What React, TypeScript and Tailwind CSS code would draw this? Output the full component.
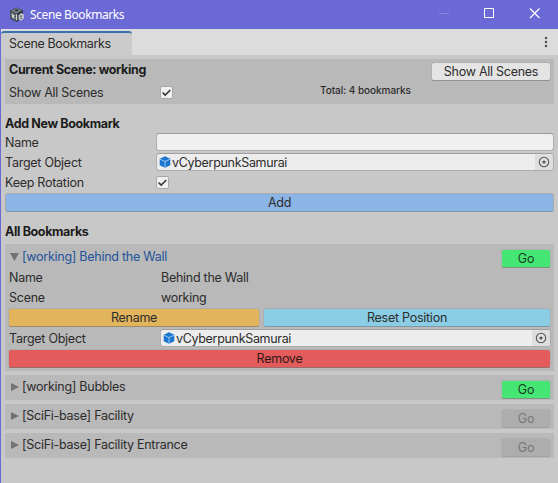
import React from "react";

function Cube() {
  return (
    <svg className="shrink-0" width="12" height="12" viewBox="0 0 12 12">
      <path d="M6 0.3 11.3 2.7V9.2L6 11.8 0.7 9.2V2.7Z" fill="#1c75cf" />
      <path d="M1 3.2 6 5.5 11 3.2M6 5.5V11.3" fill="none" stroke="#a9d2f5" strokeWidth="0.9" />
    </svg>
  );
}

function AppIcon() {
  return (
    <svg className="shrink-0" width="16" height="16" viewBox="0 0 16 16">
      <path d="M7.5 0.5 14 3.5V11L7.5 15 1 11.5V3.8Z" fill="#343a42" />
      <path d="M7.5 1 13 3.6 7.5 6.4 1.8 3.9Z" fill="#77818a" />
      <path d="M1.5 4.5 7 7V14L1.5 11Z" fill="#59636c" />
      <path d="M7.5 2.2 9.8 3.4 7.5 4.6 5.2 3.4Z" fill="#2a2f35" />
      <path d="M2.8 6.8 5.4 11.4M5.4 8 3 10.4M7.6 7.2V13.2" stroke="#d9dee2" strokeWidth="1.1" fill="none" />
      <path d="M9.6 8.2 12.4 6 14.8 7.6V11.6L12 13.8 9.6 12.4Z" fill="#c3c9ce" />
      <path d="M11.2 9.1H13M11.2 11.3H13" stroke="#4a5159" strokeWidth="1.1" />
    </svg>
  );
}

function Check() {
  return (
    <span className="flex h-[13px] w-[13px] shrink-0 items-center justify-center rounded-[2px] border border-[#a9a9a9] bg-[#f0f0f0]">
      <svg className="shrink-0" width="11" height="11" viewBox="0 0 11 11">
        <path d="M1.6 5.6 4.2 8.1 9.3 3" fill="none" stroke="#383838" strokeWidth="1.6" />
      </svg>
    </span>
  );
}

function ObjectField() {
  return (
    <div className="flex h-[18px] flex-1 items-center overflow-hidden rounded-[3px] border border-[#adadad] border-t-[#a0a0a0] bg-[#ededed] pl-[2px]">
      <Cube />
      <span className="ml-px flex-1 pt-px tracking-[-0.32px]">vCyberpunkSamurai</span>
      <span className="flex h-full w-[18px] items-center justify-center bg-[#dedede]">
        <svg width="12" height="12" viewBox="0 0 12 12">
          <circle cx="6" cy="6" r="4.7" fill="none" stroke="#555" strokeWidth="1.1" />
          <circle cx="6" cy="6" r="1.6" fill="#555" />
        </svg>
      </span>
    </div>
  );
}

function Row({ label, wide, children }: { label: string; wide?: boolean; children?: React.ReactNode }) {
  return (
    <div className="flex h-5 items-center">
      <span className={wide ? "w-[152px] shrink-0 pt-0.5" : "w-[151px] shrink-0 pt-0.5"}>{label}</span>
      {children}
    </div>
  );
}

function Go({ disabled }: { disabled?: boolean }) {
  return (
    <button
      className={
        disabled
          ? "h-[19px] w-[50px] rounded-[3px] border border-[#b1b1b1] border-b-[#a2a2a2] bg-[#adadad] leading-[17px] text-[#777]"
          : "h-[19px] w-[50px] rounded-[3px] border border-[#a9b5ab] border-b-[#7c967f] bg-[#45e673] leading-[17px] text-[#173f22]"
      }
    >
      Go
    </button>
  );
}

function Collapsed({ title, disabled }: { title: string; disabled?: boolean }) {
  return (
    <div className="mt-1 flex h-[25px] justify-between bg-[#b9b9b9] pr-[3px] pl-[6px]">
      <div className="flex h-6 items-center">
        <svg width="8" height="8" viewBox="0 0 8 8">
          <path d="M0 0 8 4 0 8Z" fill="#727272" />
        </svg>
        <span className="ml-[3px]">{title}</span>
      </div>
      <div className="flex pt-[5px]">
        <Go disabled={disabled} />
      </div>
    </div>
  );
}

export default function App() {
  return (
    <div className="flex h-[483px] w-[558px] flex-col overflow-hidden bg-[#c8c8c8] font-['Inter',sans-serif] text-[12.5px] leading-4 tracking-[-0.26px] whitespace-nowrap text-[#2c2c2c]">
      <header className="flex h-[29px] shrink-0 items-center bg-[#6b69d6] pl-[9px] font-['Noto_Sans',sans-serif] text-[12px] tracking-[-0.4px] text-white">
        <AppIcon />
        <span className="ml-[5px] flex-1">Scene Bookmarks</span>
        <svg width="124" height="29" viewBox="0 0 124 29">
          <path d="M5 13.5H15" stroke="#8b89e0" />
          <rect x="50.5" y="8.5" width="9" height="9" fill="none" stroke="white" />
          <path d="M96 8.5 105.5 18M105.5 8.5 96 18" stroke="white" strokeWidth="1.2" />
        </svg>
      </header>
      <div className="flex flex-1 flex-col border-l border-[#6b69d6]">
        <div className="flex h-[26px] items-end justify-between bg-[#dcdcdc] pr-[10px]">
          <div className="h-6 w-[131px] rounded-t-[3px] border-t-2 border-[#3a72b0] bg-[#cbcbcb] pt-[3px] pl-2 tracking-[-0.35px]">Scene Bookmarks</div>
          <svg className="mb-[7px]" width="4" height="12" viewBox="0 0 4 12">
            <circle cx="2" cy="2" r="1.25" fill="#505050" />
            <circle cx="2" cy="6" r="1.25" fill="#505050" />
            <circle cx="2" cy="10" r="1.25" fill="#505050" />
          </svg>
        </div>
        <main className="flex flex-col pt-1 pr-[4px] pl-[4px]">
          <section className="h-[45px] bg-[#b9b9b9] pr-[3px] pl-1">
            <div className="flex h-[23px] justify-between">
              <b className="pt-[3px] font-bold tracking-[-0.36px] text-[#1c1c1c]">Current Scene: working</b>
              <button className="mt-[3px] h-[19px] w-[120px] rounded-[3px] border border-[#b0b0b0] border-b-[#929292] bg-[#e4e4e4]">Show All Scenes</button>
            </div>
            <div className="flex h-5 items-center">
              <span className="w-[151px] pt-0.5">Show All Scenes</span>
              <Check />
              <span className="-mt-[4px] ml-[147px] text-[10px] font-medium tracking-[-0.05px]">Total: 4 bookmarks</span>
            </div>
          </section>
          <h2 className="mt-3 h-4 font-bold tracking-[-0.36px] text-[#1c1c1c]">Add New Bookmark</h2>
          <Row label="Name">
            <div className="h-[18px] flex-1 rounded-[3px] border border-[#b0b0b0] border-t-[#999] bg-[#f0f0f0]" />
          </Row>
          <Row label="Target Object"><ObjectField /></Row>
          <Row label="Keep Rotation"><Check /></Row>
          <button className="mt-px h-[19px] rounded-[3px] border border-[#aaa] border-b-[#8196ae] bg-[#8ab5e6]">Add</button>
          <h2 className="mt-[11px] h-4 pt-px font-bold tracking-[-0.36px] text-[#1c1c1c]">All Bookmarks</h2>
          <section className="mt-[5px] h-[127px] bg-[#b9b9b9] pr-[3px] pl-1">
            <div className="flex h-[23px] justify-between">
              <div className="flex h-[25px] items-center text-[#22539b]">
                <svg className="ml-px" width="9" height="8" viewBox="0 0 9 8">
                  <path d="M0 0H9L4.5 8Z" fill="#727272" />
                </svg>
                <span className="ml-[3px]">[working] Behind the Wall</span>
              </div>
              <div className="pt-[5px]"><Go /></div>
            </div>
            <Row wide label="Name"><span className="pt-0.5">Behind the Wall</span></Row>
            <Row wide label="Scene"><span className="pt-0.5">working</span></Row>
            <div className="-ml-px mt-px flex h-[19px] gap-[3px]">
              <button className="w-[252px] rounded-[3px] border border-[#aeaeae] border-b-[#9b8c6c] bg-[#e2b45c]">Rename</button>
              <button className="flex-1 rounded-[3px] border border-[#aeaeae] border-b-[#7e9aa5] bg-[#8acde4]">Reset Position</button>
            </div>
            <div className="mt-px"><Row label="Target Object"><ObjectField /></Row></div>
            <button className="-ml-px mt-px h-[19px] w-[543px] rounded-[3px] border border-[#aeaeae] border-b-[#9b6a6a] bg-[#e35b5b] text-[#301818]">Remove</button>
          </section>
          <Collapsed title="[working] Bubbles" />
          <Collapsed title="[SciFi-base] Facility" disabled />
          <Collapsed title="[SciFi-base] Facility Entrance" disabled />
        </main>
      </div>
    </div>
  );
}
